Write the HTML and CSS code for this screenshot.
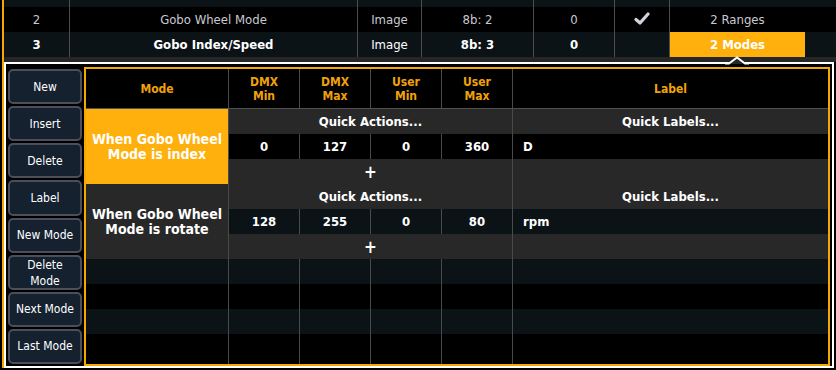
FILE: index.html
```html
<!DOCTYPE html>
<html lang="en">
<head>
    <meta charset="UTF-8">
    <title>Gobo Index/Speed - Modes</title>
    <link rel="stylesheet" href="styles.css">
</head>
<body>

<div class="frame">
    <!-- channel list above the editor -->
    <table class="channels">
        <tr class="row-dark">
            <td class="c-num"></td><td class="c-name"></td><td class="c-type"></td>
            <td class="c-addr"></td><td class="c-home"></td><td class="c-chk"></td>
            <td class="c-range"></td><td class="c-end"></td>
        </tr>
        <tr class="row-black">
            <td class="c-num">2</td><td class="c-name">Gobo Wheel Mode</td><td class="c-type">Image</td>
            <td class="c-addr">8b: 2</td><td class="c-home">0</td>
            <td class="c-chk">
                <svg width="16" height="13" viewBox="0 0 16 13"><path d="M2 7.5 L6 11 L14 2" fill="none" stroke="#d6d0dc" stroke-width="3.2" stroke-linecap="round" stroke-linejoin="round"/></svg>
            </td>
            <td class="c-range">2 Ranges</td><td class="c-end"></td>
        </tr>
        <tr class="row-dark bold">
            <td class="c-num">3</td><td class="c-name">Gobo Index/Speed</td><td class="c-type normal">Image</td>
            <td class="c-addr">8b: 3</td><td class="c-home">0</td><td class="c-chk"></td>
            <td class="c-range"><span class="modes">2 Modes</span></td><td class="c-end"></td>
        </tr>
    </table>
    <div class="strip"></div>

    <!-- mode / range editor -->
    <div class="panel">
        <svg class="caret" width="24" height="9" viewBox="0 0 24 9">
            <polygon points="2,8 12,1 22,8" fill="#262626"/>
            <polyline points="0,7.5 4,7.5 12,1.5 20,7.5 24,7.5" fill="none" stroke="#fff" stroke-width="2"/>
        </svg>

        <div class="buttons">
            <button>New</button>
            <button>Insert</button>
            <button>Delete</button>
            <button>Label</button>
            <button>New Mode</button>
            <button>Delete Mode</button>
            <button>Next Mode</button>
            <button>Last Mode</button>
        </div>

        <div class="ranges">
            <div class="hd">Mode</div>
            <div class="hd sep">DMX<br>Min</div>
            <div class="hd sep">DMX<br>Max</div>
            <div class="hd sep">User<br>Min</div>
            <div class="hd sep">User<br>Max</div>
            <div class="hd sep">Label</div>

            <!-- mode 1 -->
            <div class="mode on">When Gobo Wheel<br>Mode is index</div>
            <div class="grey span sep">Quick Actions...</div>
            <div class="grey sep">Quick Labels...</div>
            <div class="cell black sep">0</div>
            <div class="cell black sep">127</div>
            <div class="cell black sep">0</div>
            <div class="cell black sep">360</div>
            <div class="cell black sep lbl">D</div>
            <div class="grey span sep plus">+</div>
            <div class="grey sep"></div>

            <!-- mode 2 -->
            <div class="mode">When Gobo Wheel<br>Mode is rotate</div>
            <div class="grey span sep">Quick Actions...</div>
            <div class="grey sep">Quick Labels...</div>
            <div class="cell dark sep">128</div>
            <div class="cell dark sep">255</div>
            <div class="cell dark sep">0</div>
            <div class="cell dark sep">80</div>
            <div class="cell dark sep lbl">rpm</div>
            <div class="grey span sep plus">+</div>
            <div class="grey sep"></div>

            <!-- empty rows -->
            <div class="dark"></div><div class="dark sep"></div><div class="dark sep"></div><div class="dark sep"></div><div class="dark sep"></div><div class="dark sep"></div>
            <div class="black"></div><div class="black sep"></div><div class="black sep"></div><div class="black sep"></div><div class="black sep"></div><div class="black sep"></div>
            <div class="dark"></div><div class="dark sep"></div><div class="dark sep"></div><div class="dark sep"></div><div class="dark sep"></div><div class="dark sep"></div>
            <div class="black"></div><div class="black sep"></div><div class="black sep"></div><div class="black sep"></div><div class="black sep"></div><div class="black sep"></div>
        </div>
    </div>
</div>

</body>
</html>
```

FILE: styles.css
```css
body {
    margin: 0;
    padding: 0;
    width: 836px;
    height: 370px;
    overflow: hidden;
    background-color: #000;
    font-family: "DejaVu Sans Condensed", "DejaVu Sans", sans-serif;
    font-size: 13px;
    color: #fff;
}

.bold {
    font-weight: bold;
}

.normal {
    font-weight: normal;
}

.frame {
    margin-left: 2px;
    border-left: 2px solid #f5a800;
    width: 832px;
}

/* channel list */
.channels {
    border-collapse: collapse;
    table-layout: fixed;
    width: 832px;
    margin-top: -18px;
}

.channels td {
    height: 25px;
    padding: 0;
    text-align: center;
    border-left: 1px solid #4d4d4d;
    color: #c9c9d2;
}

.channels .bold td {
    color: #fff;
}

.channels td.c-num,
.channels td.c-end {
    border-left: none;
}

.row-dark {
    background-color: #0c1317;
}

.row-black {
    background-color: #000;
}

.c-num { width: 65px; }
.c-name { width: 287px; }
.c-type { width: 63px; }
.c-addr { width: 111px; }
.c-home { width: 80px; }
.c-chk { width: 54px; }
.c-range { width: 135px; }

.c-chk svg {
    display: block;
    margin: 0 auto 2px;
}

.modes {
    display: block;
    height: 25px;
    line-height: 25px;
    background-color: #ffb00d;
    color: #fff;
}

.strip {
    height: 5px;
    background-color: #262626;
}

/* editor panel */
.panel {
    position: relative;
    display: flex;
    gap: 2px;
    box-sizing: border-box;
    width: 830px;
    height: 306px;
    padding: 3px 2px 0 2px;
    border: 2px solid #fff;
    background-color: #000;
}

.caret {
    position: absolute;
    left: 719px;
    top: -8px;
}

.buttons {
    display: grid;
    grid-template-rows: repeat(8, 1fr);
    gap: 2px;
    width: 74px;
    padding-top: 2px;
    padding-bottom: 2px;
}

.buttons button {
    margin: 0;
    padding: 0 5px;
    border: 2px solid #4a4f5b;
    border-radius: 5px;
    background-color: #15212f;
    color: #fff;
    font-family: inherit;
    font-size: 12px;
    line-height: 16px;
    overflow: hidden;
}

.ranges {
    flex: 1;
    display: grid;
    grid-template-columns: 142px 71px 71px 71px 71px 1fr;
    grid-template-rows: 40px repeat(9, 25px) 1fr;
    border: 2px solid #f5a800;
    background-color: #000;
    font-weight: bold;
}

.ranges > div {
    display: flex;
    align-items: center;
    justify-content: center;
    text-align: center;
}

.sep {
    border-left: 1px solid #4a4a4a;
}

.hd {
    color: #f0a20a;
    font-size: 12px;
    line-height: 14px;
    border-bottom: 1px solid #505050;
}

.mode {
    grid-row: span 3;
    font-size: 14px;
    line-height: 15px;
    background-color: #282828;
}

.mode.on {
    background-color: #ffb00d;
}

.grey {
    background-color: #282828;
}

.span {
    grid-column: span 4;
}

.plus {
    font-size: 17px;
}

.black {
    background-color: #000;
}

.dark {
    background-color: #0c1317;
}

.ranges > .lbl {
    justify-content: flex-start;
    padding-left: 10px;
}
```
